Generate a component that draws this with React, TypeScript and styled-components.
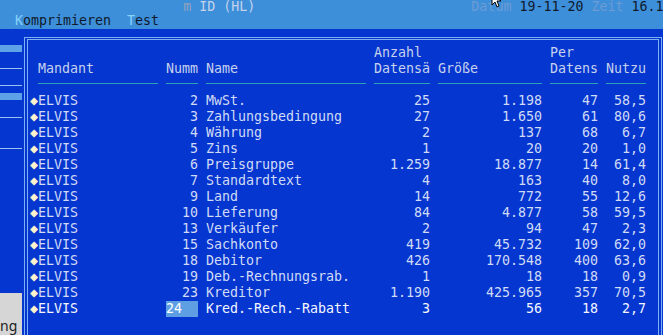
import styled, { createGlobalStyle } from "styled-components";

const Global = createGlobalStyle`
  html, body {
    margin: 0;
    padding: 0;
    background: #0536cf;
    overflow: hidden;
  }
`;

const Screen = styled.div`
  width: 663px;
  height: 335px;
  position: relative;
  overflow: hidden;
  background: #0536cf;
  font-family: "DejaVu Sans Mono", "Liberation Mono", monospace;
  font-size: 13.3px;
`;

const TopBar = styled.div`
  height: 29px;
  background: #3e8fda;
  padding-left: 15px;
  white-space: pre;
  color: #0e1a2c;
`;

const BarLine = styled.div`
  height: 14px;
  line-height: 14px;
`;

const Dim = styled.span<{ $tone?: "grey" | "faint" }>`
  color: ${(p) => (p.$tone === "grey" ? "#93a3bd" : "#6c9cd2")};
`;

const Light = styled.span`
  color: #c3d2ea;
`;

const Hot = styled.span`
  color: #86d2f8;
`;

const Pointer = styled.svg`
  position: absolute;
  left: 490px;
  top: -6px;
`;

const Body = styled.div`
  display: flex;
  height: 306px;
`;

const LeftPane = styled.div`
  width: 22px;
  margin-right: 2px;
  display: flex;
  flex-direction: column;
`;

const Rule = styled.div<{ $top: number; $bar?: boolean }>`
  margin-top: ${(p) => p.$top}px;
  height: ${(p) => (p.$bar ? 7 : 1)}px;
  background: ${(p) => (p.$bar ? "#5ea2e8" : "#9cc2f0")};
`;

const Tab = styled.div`
  margin-top: auto;
  height: 42px;
  background: #d6d6d6;
  color: #1c1c1c;
  font-family: "Noto Sans", "Open Sans", sans-serif;
  font-size: 14px;
  display: flex;
  align-items: flex-end;
  line-height: 18px;
`;

const PanelOuter = styled.div`
  margin-top: 8px;
  width: 632px;
  border: 1px solid #7cb0f0;
  border-bottom: none;
  padding: 1px 2px 0 2px;
`;

const PanelInner = styled.div`
  height: 100%;
  border: 1px solid #7cb0f0;
  border-bottom: none;
  padding: 5px 0 0 2px;
`;

const Table = styled.div`
  display: grid;
  grid-template-columns: 128px 32px 160px 56px 104px 48px 40px;
  grid-auto-rows: 16px;
  column-gap: 8px;
  line-height: 16px;
  white-space: pre;
`;

const Head = styled.div<{ $pad?: boolean }>`
  grid-row: span 2;
  display: flex;
  flex-direction: column;
  justify-content: flex-end;
  padding-left: ${(p) => (p.$pad ? 8 : 0)}px;
  color: #c6d2ee;
`;

const Under = styled.div<{ $pad?: boolean }>`
  margin-left: ${(p) => (p.$pad ? 8 : 0)}px;
  margin-top: 6px;
  height: 1px;
  background: #2aa2b4;
`;

const Cell = styled.div<{ $num?: boolean; $current?: boolean }>`
  text-align: ${(p) => (p.$num ? "right" : "left")};
  color: ${(p) => (p.$current ? "#f4f7ff" : "#d0dbf6")};
  overflow: hidden;
`;

const Cursor = styled.div`
  background: #5e9fe4;
  color: #ffffff;
`;

const Diamond = styled.span`
  color: #fff3cc;
`;

const rows: [number, string, string, string, string, string][] = [
  [2, "MwSt.", "25", "1.198", "47", "58,5"],
  [3, "Zahlungsbedingung", "27", "1.650", "61", "80,6"],
  [4, "Währung", "2", "137", "68", "6,7"],
  [5, "Zins", "1", "20", "20", "1,0"],
  [6, "Preisgruppe", "1.259", "18.877", "14", "61,4"],
  [7, "Standardtext", "4", "163", "40", "8,0"],
  [9, "Land", "14", "772", "55", "12,6"],
  [10, "Lieferung", "84", "4.877", "58", "59,5"],
  [13, "Verkäufer", "2", "94", "47", "2,3"],
  [15, "Sachkonto", "419", "45.732", "109", "62,0"],
  [18, "Debitor", "426", "170.548", "400", "63,6"],
  [19, "Deb.-Rechnungsrab.", "1", "18", "18", "0,9"],
  [23, "Kreditor", "1.190", "425.965", "357", "70,5"],
  [24, "Kred.-Rech.-Rabatt", "3", "56", "18", "2,7"],
];

export default function App() {
  return (
    <Screen>
      <Global />
      <TopBar>
        <BarLine>
          {" ".repeat(21)}
          <Dim $tone="grey">m</Dim> <Light>ID (HL)</Light>
          {" ".repeat(27)}
          <Dim>Datum</Dim> 19-11-20 <Dim>Zeit</Dim> 16.1
        </BarLine>
        <BarLine>
          <Hot>K</Hot>omprimieren  <Hot>T</Hot>est
        </BarLine>
      </TopBar>
      <Pointer width="14" height="14" viewBox="0 0 14 14">
        <path d="M2 0 L2 11 L5 8 L7 13 L9 12 L7 7 L11 7 Z" fill="#fff" stroke="#000" strokeWidth="1" />
      </Pointer>
      <Body>
        <LeftPane>
          <Rule $top={16} $bar />
          <Rule $top={16} />
          <Rule $top={16} />
          <Rule $top={7} $bar />
          <Rule $top={17} />
          <Rule $top={30} />
          <Tab>ng</Tab>
        </LeftPane>
        <PanelOuter>
          <PanelInner>
            <Table>
              <Head $pad>Mandant</Head>
              <Head>Numm</Head>
              <Head>Name</Head>
              <Head>{"Anzahl\nDatensä"}</Head>
              <Head>Größe</Head>
              <Head>{"Per\nDatens"}</Head>
              <Head>Nutzu</Head>
              <Under $pad />
              <Under />
              <Under />
              <Under />
              <Under />
              <Under />
              <Under />
              {rows.map(([nr, name, anz, size, per, use], i) => {
                const current = i === rows.length - 1;
                return [
                  <Cell key={`m${nr}`} $current={current}>
                    <Diamond>◆</Diamond>ELVIS
                  </Cell>,
                  current ? (
                    <Cursor key={`n${nr}`}>{nr}</Cursor>
                  ) : (
                    <Cell key={`n${nr}`} $num>
                      {nr}
                    </Cell>
                  ),
                  <Cell key={`t${nr}`} $current={current}>
                    {name}
                  </Cell>,
                  <Cell key={`a${nr}`} $num $current={current}>
                    {anz}
                  </Cell>,
                  <Cell key={`g${nr}`} $num $current={current}>
                    {size}
                  </Cell>,
                  <Cell key={`p${nr}`} $num $current={current}>
                    {per}
                  </Cell>,
                  <Cell key={`u${nr}`} $num $current={current}>
                    {use}
                  </Cell>,
                ];
              })}
            </Table>
          </PanelInner>
        </PanelOuter>
      </Body>
    </Screen>
  );
}
